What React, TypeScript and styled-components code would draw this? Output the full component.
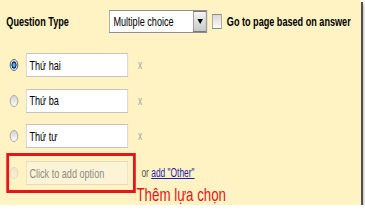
import { createGlobalStyle, styled } from "styled-components";

const GlobalStyle = createGlobalStyle`
  html, body {
    margin: 0;
    padding: 0;
    background: #ffffff;
  }
  body {
    font-family: "Liberation Sans", Arial, sans-serif;
  }
`;

const Panel = styled.div`
  width: 361px;
  height: 205px;
  background: #fff3c4;
  box-shadow: 2px 2px 0 #4f4f4f, 3px 4px 3px #b8b8b8;
  overflow: hidden;
`;

// the screenshot was squeezed sideways, so the form is laid out wide and scaled
const Form = styled.div`
  width: 514px;
  box-sizing: border-box;
  padding: 10px 0 0 9px;
  transform: scaleX(0.7);
  transform-origin: 0 0;
  display: flex;
  flex-direction: column;
`;

const Header = styled.div`
  display: flex;
  align-items: center;
  height: 23px;
`;

const Label = styled.div`
  width: 147px;
  font-size: 13px;
  font-weight: bold;
  color: #000;
`;

const Select = styled.div`
  width: 140px;
  height: 23px;
  box-sizing: border-box;
  border: 1px solid #8e8e8e;
  background: #fff;
  display: flex;
  align-items: center;
  font-size: 13px;
  color: #000;
  padding-left: 5px;
`;

const SelectText = styled.span`
  flex: 1;
`;

const DropButton = styled.span`
  width: 19px;
  height: 21px;
  box-sizing: border-box;
  border: 1px solid #7a7a7a;
  background: linear-gradient(#f4f4f4, #c9c9c9);
  display: flex;
  align-items: center;
  justify-content: center;

  &::after {
    content: "";
    border-left: 4px solid transparent;
    border-right: 4px solid transparent;
    border-top: 5px solid #000;
  }
`;

const Checkbox = styled.span`
  width: 14px;
  height: 15px;
  box-sizing: border-box;
  margin: 0 7px;
  border: 1px solid #8a8a8a;
  background: linear-gradient(#d9d9d9, #fbfbfb);
`;

const CheckLabel = styled.span`
  font-size: 13px;
  font-weight: bold;
  color: #000;
`;

const Options = styled.div`
  display: flex;
  flex-direction: column;
  gap: 11.5px;
  margin-top: 20px;
`;

const Row = styled.div`
  display: flex;
  align-items: center;
  height: 24px;
`;

const Radio = styled.span<{ $kind: "on" | "off" | "ghost" }>`
  width: 12px;
  height: 12px;
  box-sizing: border-box;
  border-radius: 50%;
  margin: 0 11px 0 5px;
  flex: none;
  border: 1px solid
    ${(p) => (p.$kind === "on" ? "#3d4c5c" : p.$kind === "off" ? "#9b9b9b" : "#dcd5b4")};
  background: ${(p) =>
    p.$kind === "on"
      ? "radial-gradient(circle, #52b4f0 0 1.5px, #0c3f86 2.5px, #23324a 3.3px, #dfe3e8 4px, #f6f6f6 6px)"
      : p.$kind === "off"
      ? "linear-gradient(#d3d3d3, #fbfbfb)"
      : "linear-gradient(#efe7c4, #f8f1d2)"};
`;

const TextBox = styled.div<{ $ghost?: boolean }>`
  width: 146px;
  height: 24px;
  box-sizing: border-box;
  padding-left: 4px;
  display: flex;
  align-items: center;
  font-size: 13px;
  color: ${(p) => (p.$ghost ? "#8b8b85" : "#000")};
  background: ${(p) => (p.$ghost ? "#fdf4d6" : "#fff")};
  border: 1px solid ${(p) => (p.$ghost ? "#e3dbbb" : "#c4c4c4")};
`;

const Remove = styled.span`
  margin-left: 14px;
  font-size: 12px;
  color: #a5a5a5;
`;

const AddRow = styled.div`
  display: flex;
  align-items: flex-start;
  margin-top: 5px;
`;

const Highlight = styled.div`
  width: 185px;
  height: 40px;
  box-sizing: border-box;
  border: 3px solid #e8141c;
  border-left-width: 4px;
  border-right-width: 4px;
  padding-left: 0;
  display: flex;
  align-items: center;
  margin-left: 0;

  & > span {
    margin-left: 1px;
  }
`;

const Side = styled.div`
  display: flex;
  flex-direction: column;
  padding-top: 13px;
`;

const OrLine = styled.div`
  margin-left: 8px;
  font-size: 12px;
  line-height: 14px;
  color: #555;
`;

const OtherLink = styled.a`
  color: #1d1dae;
  text-decoration: underline;
`;

const Note = styled.div`
  margin-top: 5px;
  margin-left: 1px;
  font-size: 19px;
  line-height: 19px;
  color: #e3141a;
`;

const options = ["Thứ hai", "Thứ ba", "Thứ tư"];

export default function App() {
  return (
    <>
      <GlobalStyle />
      <Panel>
        <Form>
          <Header>
            <Label>Question Type</Label>
            <Select>
              <SelectText>Multiple choice</SelectText>
              <DropButton />
            </Select>
            <Checkbox />
            <CheckLabel>Go to page based on answer</CheckLabel>
          </Header>
          <Options>
            {options.map((opt, i) => (
              <Row key={opt}>
                <Radio $kind={i === 0 ? "on" : "off"} />
                <TextBox>{opt}</TextBox>
                <Remove>x</Remove>
              </Row>
            ))}
          </Options>
          <AddRow>
            <Highlight>
              <Radio $kind="ghost" />
              <TextBox $ghost>Click to add option</TextBox>
            </Highlight>
            <Side>
              <OrLine>
                or <OtherLink href="#">add "Other"</OtherLink>
              </OrLine>
              <Note>Thêm lựa chọn</Note>
            </Side>
          </AddRow>
        </Form>
      </Panel>
    </>
  );
}
